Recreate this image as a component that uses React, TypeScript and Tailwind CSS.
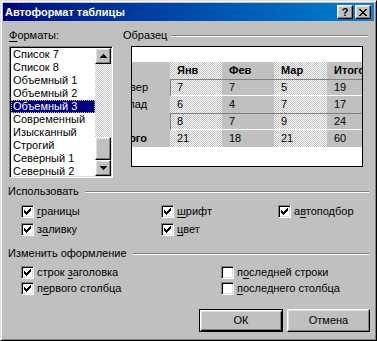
const raised =
  'border border-t-white border-l-white border-r-black border-b-black shadow-[inset_-1px_-1px_#808080,inset_1px_1px_#dfdfdf] bg-[#c0c0c0]'
const sunken =
  'border border-t-[#808080] border-l-[#808080] border-r-white border-b-white shadow-[inset_1px_1px_#000,inset_-1px_-1px_#dfdfdf]'
const dither = 'bg-[image:repeating-conic-gradient(#fff_0_25%,#c0c0c0_0_50%)] bg-[length:2px_2px]'
const etched = 'h-[2px] border-t border-t-[#808080] border-b border-b-white'

const formats = [
  'Список 7',
  'Список 8',
  'Объемный 1',
  'Объемный 2',
  'Объемный 3',
  'Современный',
  'Изысканный',
  'Строгий',
  'Северный 1',
  'Северный 2',
]

const rows = [
  { label: '', cells: ['Янв', 'Фев', 'Мар', 'Итого'], head: true, sunk: false },
  { label: 'Север', cells: ['7', '7', '5', '19'], head: false, sunk: true },
  { label: 'Запад', cells: ['6', '4', '7', '17'], head: false, sunk: false },
  { label: 'Юг', cells: ['8', '7', '9', '24'], head: false, sunk: true },
  { label: 'Итого', cells: ['21', '18', '21', '60'], head: false, sunk: false },
]

const colWidths = ['w-[52px]', 'w-[52px]', 'w-[53px]', 'w-[53px]']
const colBg = [dither, 'bg-[#c0c0c0]', dither, 'bg-[#c0c0c0]']

function Mn({ text, at }: { text: string; at: number }) {
  if (at < 0) return <span>{text}</span>
  return (
    <span>
      {text.slice(0, at)}
      <span className="underline underline-offset-[2px]">{text[at]}</span>
      {text.slice(at + 1)}
    </span>
  )
}

function CheckMark() {
  return (
    <svg width="7" height="7" viewBox="0 0 7 7" shapeRendering="crispEdges">
      <path d="M0 2h1v3h-1zM1 3h1v3h-1zM2 4h1v3h-1zM3 3h1v3h-1zM4 2h1v3h-1zM5 1h1v3h-1zM6 0h1v3h-1z" fill="#000" />
    </svg>
  )
}

function Check({ checked, label, at, className = '' }: { checked: boolean; label: string; at: number; className?: string }) {
  return (
    <div className={`flex h-[13px] items-center ${className}`}>
      <div className={`flex h-[13px] w-[13px] shrink-0 items-center justify-center bg-white ${sunken}`}>
        {checked && <CheckMark />}
      </div>
      <span className="ml-[3px] leading-[13px]">
        <Mn text={label} at={at} />
      </span>
    </div>
  )
}

function Arrow({ down }: { down?: boolean }) {
  return (
    <svg width="7" height="4" viewBox="0 0 7 4" shapeRendering="crispEdges">
      <path
        d={down ? 'M0 0h7v1h-7zM1 1h5v1h-5zM2 2h3v1h-3zM3 3h1v1h-1z' : 'M3 0h1v1h-1zM2 1h3v1h-3zM1 2h5v1h-5zM0 3h7v1h-7z'}
        fill="#000"
      />
    </svg>
  )
}

function Section({ title }: { title: string }) {
  return (
    <div className="flex h-[13px] items-center pl-[5px] pr-[5px]">
      <span className="leading-[13px]">{title}</span>
      <div className={`ml-[6px] flex-1 ${etched}`} />
    </div>
  )
}

export default function App() {
  return (
    <div className="h-[341px] w-[377px] border border-t-[#dfdfdf] border-l-[#dfdfdf] border-r-black border-b-black bg-[#c0c0c0] p-[2px] font-['Liberation_Sans',Arial,sans-serif] text-[11px] text-black shadow-[inset_1px_1px_#fff,inset_-1px_-1px_#808080]">
      <div className="flex h-[18px] items-center bg-linear-to-r from-[#000080] to-[#1084d0] pl-[2px] pr-[3px]">
        <span className="flex-1 text-[11px] font-bold leading-[13px] text-white">Автоформат таблицы</span>
        <div className="flex gap-[2px]">
          <div className={`flex h-[14px] w-[16px] items-center justify-center text-[11px] font-bold leading-none ${raised}`}>?</div>
          <div className={`flex h-[14px] w-[16px] items-center justify-center ${raised}`}>
            <svg width="8" height="7" viewBox="0 0 8 7" shapeRendering="crispEdges">
              <path
                d="M0 0h2v1h-2zM6 0h2v1h-2zM1 1h2v1h-2zM5 1h2v1h-2zM2 2h4v1h-4zM3 3h2v1h-2zM2 4h4v1h-4zM1 5h2v1h-2zM5 5h2v1h-2zM0 6h2v1h-2zM6 6h2v1h-2z"
                fill="#000"
              />
            </svg>
          </div>
        </div>
      </div>

      <div className="flex">
        <div className="flex flex-col pl-[6px]">
          <div className="mt-[8px] h-[13px] leading-[13px]">
            <Mn text="Форматы:" at={0} />
          </div>
          <div className={`mt-[4px] flex h-[132px] w-[104px] bg-white p-px ${sunken}`}>
            <div className="flex-1 overflow-hidden">
              {formats.map((f, i) => (
                <div
                  key={f}
                  className={`h-[13px] shrink-0 whitespace-nowrap pl-[2px] leading-[13px] ${
                    i === 4 ? 'bg-[#000080] text-white outline-1 -outline-offset-1 outline-dotted outline-[#c0c080]' : ''
                  }`}
                >
                  {f}
                </div>
              ))}
            </div>
            <div className="flex w-[16px] flex-col">
              <div className={`flex h-[16px] items-center justify-center ${raised}`}>
                <Arrow />
              </div>
              <div className={`h-[73px] ${dither}`} />
              <div className={`h-[23px] ${raised}`} />
              <div className={`flex h-[16px] items-center justify-center ${raised}`}>
                <Arrow down />
              </div>
            </div>
          </div>
        </div>

        <div className="ml-[10px] mr-[6px] flex flex-1 flex-col">
          <div className="mt-[8px] flex h-[13px] items-center">
            <span className="leading-[13px]">Образец</span>
            <div className={`ml-[4px] flex-1 ${etched}`} />
          </div>
          <div className="ml-[8px] mt-[4px] h-[121px] w-[232px] overflow-hidden border border-black bg-white pt-[15px]">
            <div className="-ml-[20px] flex flex-col font-['Liberation_Sans',Arial,sans-serif]">
              {rows.map((r, ri) => (
                <div key={ri} className="flex h-[17px] whitespace-nowrap">
                  <div
                    className={`flex w-[58px] shrink-0 items-center bg-[#c0c0c0] pl-[4px] ${
                      ri === 4 ? 'font-bold' : ''
                    }`}
                  >
                    {r.label}
                  </div>
                  {r.cells.map((c, ci) => (
                    <div
                      key={ci}
                      className={`flex shrink-0 items-center ${colWidths[ci]} ${colBg[ci]} ${
                        r.head ? 'font-bold' : ''
                      } ${r.sunk ? 'border-t border-b border-t-[#808080] border-b-white' : ''} ${
                        r.sunk && ci === 0 ? 'border-l border-l-[#808080] pl-[6px]' : 'pl-[7px]'
                      }`}
                    >
                      {c}
                    </div>
                  ))}
                </div>
              ))}
            </div>
          </div>
        </div>
      </div>

      <div className="mt-[7px]">
        <Section title="Использовать" />
      </div>
      <div className="mt-[7px] flex pl-[18px]">
        <Check checked label="границы" at={0} className="w-[140px]" />
        <Check checked label="шрифт" at={0} className="w-[117px]" />
        <Check checked label="автоподбор" at={1} />
      </div>
      <div className="mt-[5px] flex pl-[18px]">
        <Check checked label="заливку" at={1} className="w-[140px]" />
        <Check checked label="цвет" at={0} />
      </div>

      <div className="mt-[11px]">
        <Section title="Изменить оформление" />
      </div>
      <div className="mt-[6px] flex pl-[18px]">
        <Check checked label="строк заголовка" at={6} className="w-[200px]" />
        <Check checked={false} label="последней строки" at={1} />
      </div>
      <div className="mt-[3px] flex pl-[18px]">
        <Check checked label="первого столбца" at={1} className="w-[200px]" />
        <Check checked={false} label="последнего столбца" at={0} />
      </div>

      <div className="mt-[14px] flex justify-end gap-[4px] pr-[4px]">
        <div className="flex h-[23px] w-[84px] items-center justify-center border border-black bg-[#c0c0c0] shadow-[inset_1px_1px_#fff,inset_-1px_-1px_#000,inset_2px_2px_#dfdfdf,inset_-2px_-2px_#808080]">
          ОК
        </div>
        <div className={`flex h-[23px] w-[83px] items-center justify-center ${raised}`}>Отмена</div>
      </div>
    </div>
  )
}
